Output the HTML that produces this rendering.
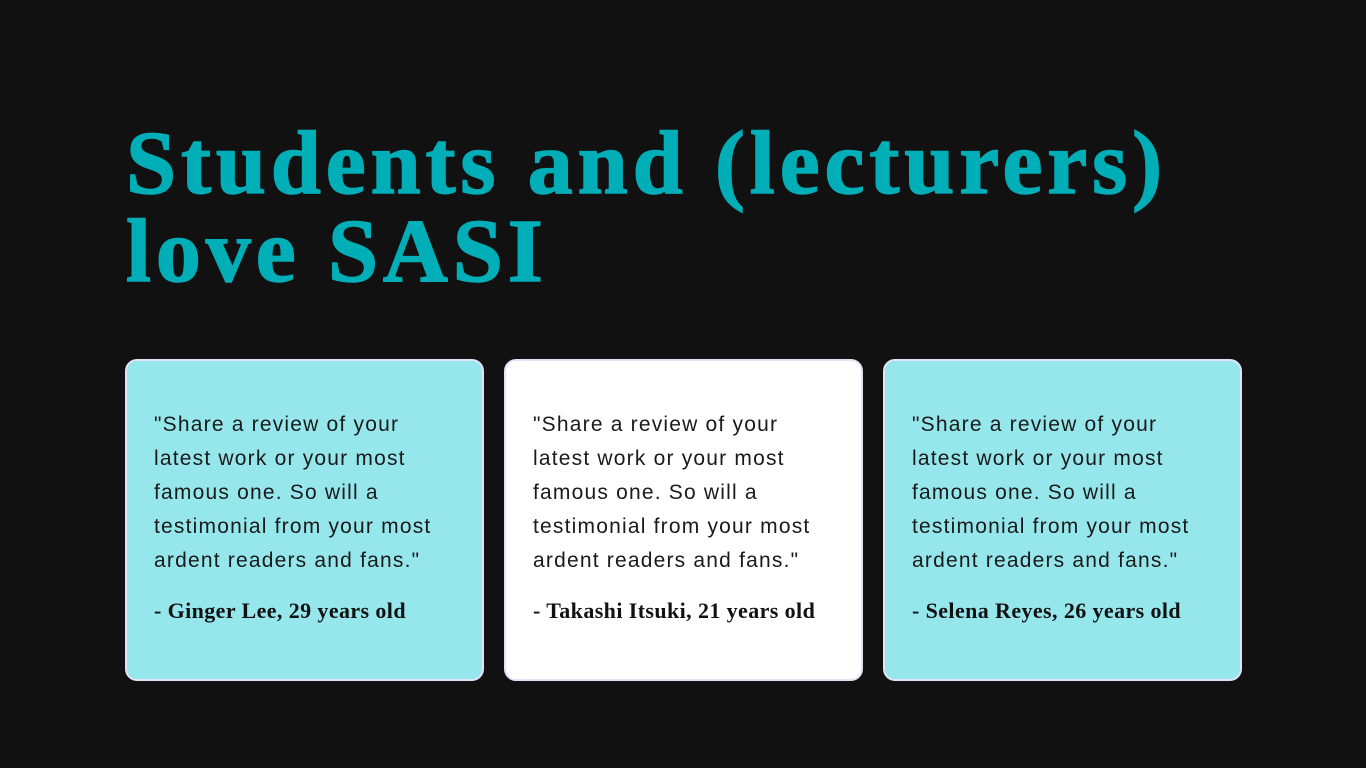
<!DOCTYPE html>
<html><head><meta charset="utf-8"><style>
body{margin:0;width:1366px;height:768px;background:#111111;overflow:hidden;position:relative;font-family:"Liberation Sans",sans-serif}
h1{position:absolute;left:126px;top:120px;margin:0;font-family:"Liberation Serif",serif;font-weight:bold;font-size:90px;line-height:88px;color:#00aeb8;letter-spacing:4.9px;white-space:nowrap;-webkit-text-stroke:1.5px #00aeb8}
.card{position:absolute;top:359px;width:355px;height:318px;border-radius:12px;border:2px solid #e4e0f5;background:#96e7ec}
.card.w{background:#fff}
.q{position:absolute;left:27px;top:47px;width:320px;font-size:21px;line-height:34px;color:#1a1a1a;white-space:nowrap;letter-spacing:1.2px}
.a{position:absolute;left:27px;top:237px;font-family:"Liberation Serif",serif;font-weight:bold;font-size:22px;color:#111;white-space:nowrap;letter-spacing:0.4px}
</style></head><body>
<h1>Students and (lecturers)<br>love SASI</h1>
<div class="card" style="left:125px"><div class="q">"Share a review of your<br>latest work or your most<br>famous one. So will a<br>testimonial from your most<br>ardent readers and fans."</div><div class="a">- Ginger Lee, 29 years old</div></div>
<div class="card w" style="left:504px"><div class="q">"Share a review of your<br>latest work or your most<br>famous one. So will a<br>testimonial from your most<br>ardent readers and fans."</div><div class="a">- Takashi Itsuki, 21 years old</div></div>
<div class="card" style="left:883px"><div class="q">"Share a review of your<br>latest work or your most<br>famous one. So will a<br>testimonial from your most<br>ardent readers and fans."</div><div class="a">- Selena Reyes, 26 years old</div></div>
</body></html>
